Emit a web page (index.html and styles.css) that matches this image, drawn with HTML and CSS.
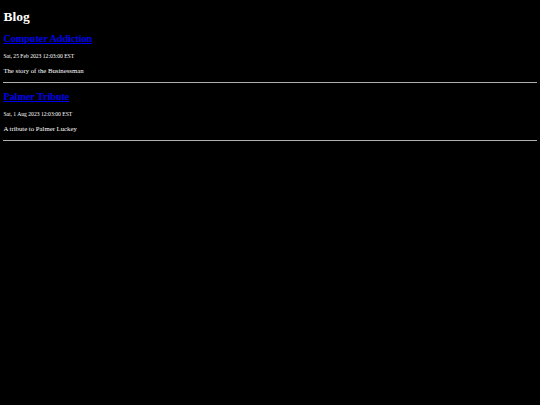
FILE: index.html
```html
<!DOCTYPE html>
<html>
<head><link rel="stylesheet" href="styles.css"></head>
<body>
<h1 class="title">Blog</h1>
<article class="post">
<h2 class="post-title"><a href="#">Computer Addiction</a></h2>
<p class="post-date">Sat, 25 Feb 2023 12:03:00 EST</p>
<p class="post-summary">The story of the Businessman</p>
<hr class="divider">
</article>
<article class="post">
<h2 class="post-title"><a href="#">Palmer Tribute</a></h2>
<p class="post-date">Sat, 1 Aug 2023 12:03:00 EST</p>
<p class="post-summary">A tribute to Palmer Luckey</p>
<hr class="divider">
</article>
</body>
</html>
```
FILE: styles.css
```css
html { background: #000; }
body {
  margin: 0;
  padding: 8.6px 3.375px 3.375px;
  color: #fff;
  font-family: "Liberation Serif", "Times New Roman", serif;
  font-size: 6.75px;
  line-height: 7.6px;
}
.title {
  font-size: 13.5px;
  line-height: 15.6px;
  margin: 0 0 9.05px;
  font-weight: bold;
}
.post-title {
  font-size: 10.125px;
  line-height: 11.4px;
  margin: 8.4px 0;
  font-weight: bold;
}
.post-title a { color: #0000ee; }
.post-date {
  font-size: 5.625px;
  line-height: 7.6px;
  margin: 6.75px 0;
}
.post-summary {
  font-size: 6.75px;
  line-height: 7.6px;
  margin: 6.75px 0;
}
.divider {
  margin: 3.375px 0;
  border: 0;
  border-top: 1px solid #b0b0b0;
  height: 0;
}
```
